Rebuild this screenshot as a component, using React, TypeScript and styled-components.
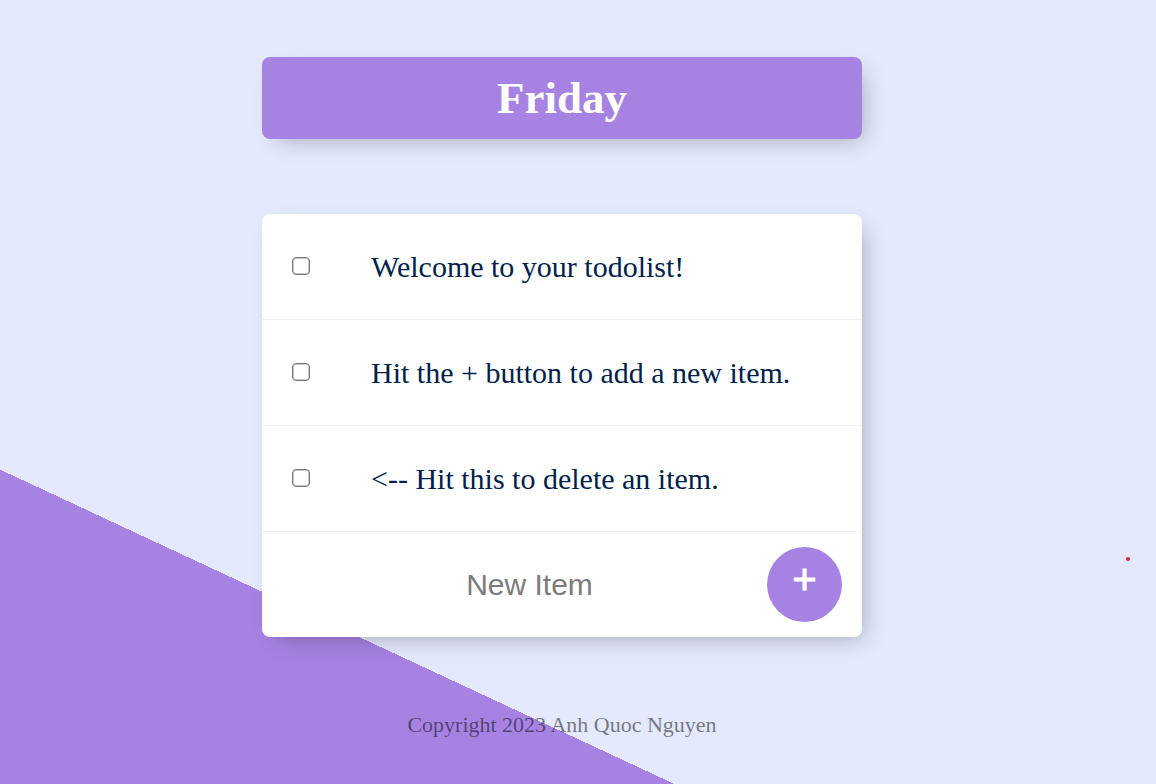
import React, { useState } from "react";
import styled, { createGlobalStyle } from "styled-components";

const lilac = "#a683e3";
const mist = "#e4e9fd";

const GlobalStyle = createGlobalStyle`
  *, *::before, *::after { box-sizing: border-box; }
  html { min-height: 100%; background: ${mist}; }
  body {
    margin: 0;
    min-height: 100vh;
    background: linear-gradient(25deg, ${lilac} 285px, ${mist} 285px) no-repeat;
    font-family: "Liberation Serif", "Times New Roman", serif;
    color: #000;
  }
`;

const Page = styled.div`
  display: flex;
  flex-direction: column;
  align-items: center;
  padding: 57px 32px 40px 0;
`;

const Panel = styled.section`
  width: 100%;
  max-width: 600px;
  border-radius: 8px;
  box-shadow: 8px 8px 23px -8px rgba(0, 0, 0, 0.3);
`;

const Heading = styled(Panel)`
  background: ${lilac};
  padding: 15px;
  margin-bottom: 75px;
`;

const Title = styled.h1`
  margin: 0;
  color: #fff;
  font-size: 45px;
  line-height: 52px;
  text-align: center;
`;

const List = styled(Panel)`
  background: #fff;
`;

const Items = styled.ul`
  list-style: none;
  margin: 0;
  padding: 0;
`;

const Item = styled.li`
  display: flex;
  align-items: center;
  min-height: 106px;
  padding: 0 20px 0 30px;
  border-bottom: 1px solid #f1f1f1;
`;

const Check = styled.input`
  appearance: none;
  flex: none;
  width: 18px;
  height: 18px;
  margin: 0 61px 2px 0;
  border: 1px solid #767676;
  border-radius: 4px;
  background: #fff;
  box-shadow: inset 0 0 0 1px rgba(118, 118, 118, 0.4);
  &:checked { background: ${lilac}; }
`;

const Label = styled.label<{ $done: boolean }>`
  color: #001f4d;
  font-size: 30px;
  line-height: 36px;
  text-decoration: ${(p) => (p.$done ? "line-through" : "none")};
`;

const NewItem = styled.form`
  display: flex;
  align-items: center;
  min-height: 105px;
  padding: 0 20px 0 30px;
`;

const TextBox = styled.input`
  flex: 1;
  min-width: 0;
  height: 90px;
  padding: 0;
  border: 0;
  outline: 0;
  background: transparent;
  font: 30px "Liberation Sans", Arial, sans-serif;
  text-align: center;
  &::placeholder { color: #7b7b7b; opacity: 1; }
`;

const AddButton = styled.button`
  flex: none;
  width: 75px;
  height: 75px;
  padding: 0 0 9px;
  border: 0;
  border-radius: 50%;
  background: ${lilac};
  color: #fff;
  font: 42px "Liberation Sans", Arial, sans-serif;
  -webkit-text-stroke: 1px #fff;
  cursor: pointer;
`;

const Footer = styled.footer`
  margin-top: 75px;
  color: rgba(0, 0, 0, 0.5);
  font-size: 22px;
  line-height: 26px;
  text-align: center;
`;

const Dot = styled.span`
  position: absolute;
  top: 557px;
  right: 26px;
  width: 4px;
  height: 4px;
  border-radius: 50%;
  background: #ed1c24;
`;

const initial = [
  "Welcome to your todolist!",
  "Hit the + button to add a new item.",
  "<-- Hit this to delete an item.",
];

export default function App() {
  const [items, setItems] = useState(initial.map((text) => ({ text, done: false })));
  const [draft, setDraft] = useState("");

  const toggle = (index: number) =>
    setItems(items.map((item, i) => (i === index ? { ...item, done: !item.done } : item)));

  const add = (event: React.FormEvent) => {
    event.preventDefault();
    if (!draft.trim()) return;
    setItems([...items, { text: draft, done: false }]);
    setDraft("");
  };

  return (
    <>
      <GlobalStyle />
      <Page as="main">
        <Heading>
          <Title>Friday</Title>
        </Heading>
        <List>
          <Items>
            {items.map((item, i) => (
              <Item key={i}>
                <Check
                  id={`item-${i}`}
                  type="checkbox"
                  checked={item.done}
                  onChange={() => toggle(i)}
                />
                <Label htmlFor={`item-${i}`} $done={item.done}>
                  {item.text}
                </Label>
              </Item>
            ))}
          </Items>
          <NewItem onSubmit={add}>
            <TextBox
              type="text"
              aria-label="New Item"
              placeholder="New Item"
              autoComplete="off"
              value={draft}
              onChange={(e) => setDraft(e.target.value)}
            />
            <AddButton type="submit">+</AddButton>
          </NewItem>
        </List>
        <Footer>Copyright 2023 Anh Quoc Nguyen</Footer>
      </Page>
      <Dot aria-hidden="true" />
    </>
  );
}
